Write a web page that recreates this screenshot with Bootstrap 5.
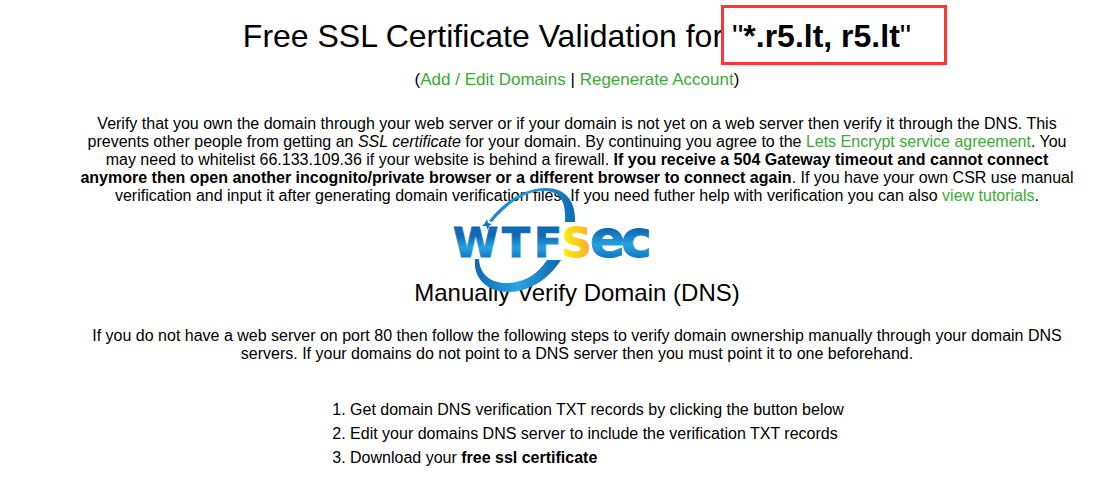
<!DOCTYPE html>
<html lang="en">
<head>
<meta charset="utf-8">
<meta name="viewport" content="width=device-width, initial-scale=1">
<title>Free SSL Certificate Validation</title>
<link href="https://cdn.jsdelivr.net/npm/bootstrap@5.3.0/dist/css/bootstrap.min.css" rel="stylesheet">
<style>
body { font-family: "Liberation Sans", Arial, sans-serif; font-size: 16px; line-height: 18px; color: #000; background: #fff; }
a { color: #3aaa35; text-decoration: none; }
a:hover { text-decoration: underline; }
.page-body { padding: 16px 28px 8px 77px; }
h1 { font-size: 32px; line-height: 40px; font-weight: 400; margin-bottom: 13px; }
h2 { font-size: 24px; line-height: 28px; font-weight: 400; margin-bottom: 20px; }
.account-links { font-size: 17px; line-height: 22px; margin-bottom: 24px; }
.intro { margin-bottom: 74px; }
.dns-help { margin-bottom: 35px; }
.steps { line-height: 24px; padding-left: 40px; }
.highlight-box { inset: -11px -36px -9px -11px; border: 3px solid #fa3636; pointer-events: none; }
.watermark { left: calc(50% - 127px); top: -95px; pointer-events: none; }
.watermark text { font-family: "DejaVu Sans", sans-serif; font-weight: 700; stroke-width: 1; }
</style>
</head>
<body>
<main class="page-body text-center">
  <h1>Free SSL Certificate Validation for <span class="position-relative d-inline-block">"<strong>*.r5.lt, r5.lt</strong>"<span class="highlight-box position-absolute"></span></span></h1>
  <p class="account-links">(<a href="#domains">Add / Edit Domains</a> | <a href="#account">Regenerate Account</a>)</p>
  <p class="intro">Verify that you own the domain through your web server or if your domain is not yet on a web server then verify it through the DNS. This prevents other people from getting an <em>SSL certificate</em> for your domain. By continuing you agree to the <a href="#agreement">Lets Encrypt service agreement</a>. You may need to whitelist 66.133.109.36 if your website is behind a firewall. <strong>If you receive a 504 Gateway timeout and cannot connect anymore then open another incognito/private browser or a different browser to connect again</strong>. If you have your own CSR use manual verification and input it after generating domain verification files. If you need futher help with verification you can also <a href="#tutorials">view tutorials</a>.</p>

  <section class="position-relative">
    <h2>Manually Verify Domain (DNS)</h2>
    <svg class="watermark position-absolute" width="204" height="112" viewBox="450 184 204 112" role="img" aria-label="WTFSEC logo">
      <defs>
        <linearGradient id="blue" x1="0" y1="0" x2="0" y2="1">
          <stop offset="0" stop-color="#0e6ab5"/><stop offset=".35" stop-color="#0e6ab5"/><stop offset=".6" stop-color="#27a2e0"/><stop offset=".85" stop-color="#0f6fba"/>
        </linearGradient>
        <linearGradient id="arcTop"><stop offset="0" stop-color="#1c87cd"/><stop offset=".5" stop-color="#2698db"/><stop offset="1" stop-color="#0e69b4"/></linearGradient>
        <linearGradient id="arcLow"><stop offset="0" stop-color="#0e69b4"/><stop offset=".5" stop-color="#2aa4e2"/><stop offset="1" stop-color="#0e65b0"/></linearGradient>
        <linearGradient id="gold"><stop offset="0" stop-color="#fbf20c"/><stop offset="1" stop-color="#f9ab29"/></linearGradient>
      </defs>
      <path fill="url(#arcTop)" d="M489 221C503 202 524 188 546 188C566 188 576 202 575 222H565C566 202 561 191 543 191C525 191 507 204 492 222Z"/>
      <path fill="url(#arcLow)" d="M475 259H479C480 275 491 283 507 283C523 283 537 275 547 260H561C549 279 529 292 508 292C488 292 473 279 475 259Z"/>
      <path fill="#1478c0" d="M487 219L488 223L492 224L489 226L488 230L486 226L482 226L485 223Z"/>
      <text x="453 502 534" y="257" font-size="41" fill="url(#blue)" stroke="url(#blue)">WTF</text>
      <text x="562" y="257" font-size="41" fill="url(#gold)" stroke="url(#gold)">S</text>
      <text x="590 621" y="257" font-size="52" fill="url(#blue)" stroke="url(#blue)">ec</text>
    </svg>
    <p class="dns-help">If you do not have a web server on port 80 then follow the following steps to verify domain ownership manually through your domain DNS servers. If your domains do not point to a DNS server then you must point it to one beforehand.</p>
    <ol class="steps d-inline-block text-start mb-0">
      <li>Get domain DNS verification TXT records by clicking the button below</li>
      <li>Edit your domains DNS server to include the verification TXT records</li>
      <li>Download your <strong>free ssl certificate</strong></li>
    </ol>
  </section>
</main>
<script src="https://cdn.jsdelivr.net/npm/bootstrap@5.3.0/dist/js/bootstrap.bundle.min.js"></script>
</body>
</html>
